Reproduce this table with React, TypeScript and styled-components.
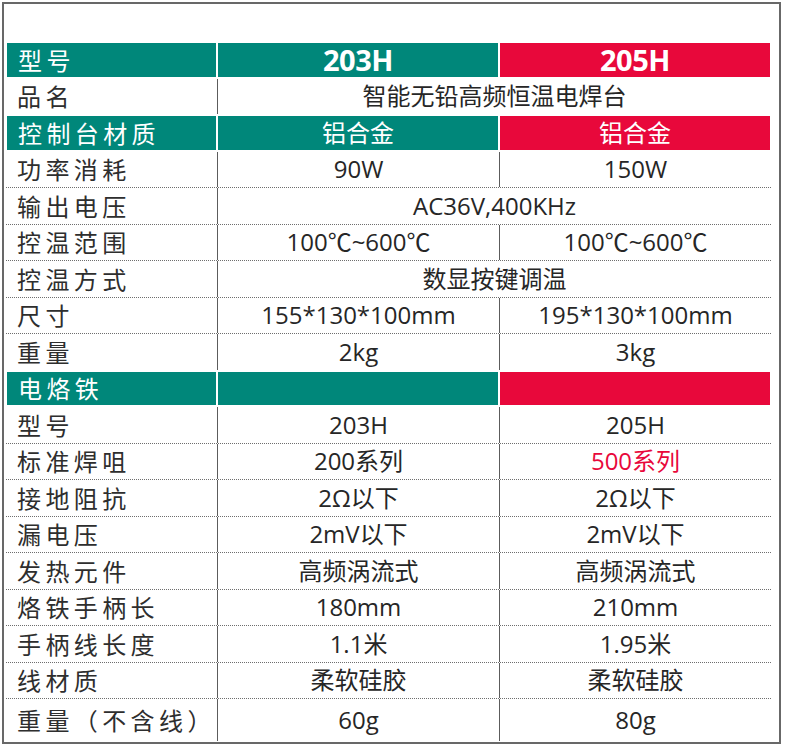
import React from 'react';
import styled, { createGlobalStyle, css } from 'styled-components';

const TEAL = '#00877a';
const RED = '#e8083b';
const RULE = '#5c5c5c';

type Tone = 'teal' | 'red';

type Cell = {
  text: string;
  tone?: Tone;
  bold?: boolean;
  accent?: boolean;
  span?: boolean;
};

type Spec = {
  label: string;
  header?: boolean;
  cells: Cell[];
};

const pair = (a: string, b: string): Cell[] => [{ text: a }, { text: b }];

const rows: Spec[] = [
  {
    label: '型号',
    header: true,
    cells: [
      { text: '203H', tone: 'teal', bold: true },
      { text: '205H', tone: 'red', bold: true },
    ],
  },
  { label: '品名', cells: [{ text: '智能无铅高频恒温电焊台', span: true }] },
  {
    label: '控制台材质',
    header: true,
    cells: [
      { text: '铝合金', tone: 'teal' },
      { text: '铝合金', tone: 'red' },
    ],
  },
  { label: '功率消耗', cells: pair('90W', '150W') },
  { label: '输出电压', cells: [{ text: 'AC36V,400KHz', span: true }] },
  { label: '控温范围', cells: pair('100℃~600℃', '100℃~600℃') },
  { label: '控温方式', cells: [{ text: '数显按键调温', span: true }] },
  { label: '尺寸', cells: pair('155*130*100mm', '195*130*100mm') },
  { label: '重量', cells: pair('2kg', '3kg') },
  {
    label: '电烙铁',
    header: true,
    cells: [
      { text: '', tone: 'teal' },
      { text: '', tone: 'red' },
    ],
  },
  { label: '型号', cells: pair('203H', '205H') },
  { label: '标准焊咀', cells: [{ text: '200系列' }, { text: '500系列', accent: true }] },
  { label: '接地阻抗', cells: pair('2Ω以下', '2Ω以下') },
  { label: '漏电压', cells: pair('2mV以下', '2mV以下') },
  { label: '发热元件', cells: pair('高频涡流式', '高频涡流式') },
  { label: '烙铁手柄长', cells: pair('180mm', '210mm') },
  { label: '手柄线长度', cells: pair('1.1米', '1.95米') },
  { label: '线材质', cells: pair('柔软硅胶', '柔软硅胶') },
  { label: '重量（不含线）', cells: pair('60g', '80g') },
];

export default function App(): JSX.Element {
  return (
    <>
      <GlobalStyle />
      <Frame>
        <Table>
          {rows.map((row, i) => {
            const next = rows[i + 1];
            const ruled = !row.header && !!next && !next.header;
            return (
              <Row key={i} $ruled={ruled} $tall={!next}>
                <Label $tone={row.header ? 'teal' : undefined}>{row.label}</Label>
                {row.cells.map((cell, j) => (
                  <Value
                    key={j}
                    $tone={cell.tone}
                    $span={cell.span}
                    $bold={cell.bold}
                    $accent={cell.accent}
                  >
                    {cell.text}
                  </Value>
                ))}
              </Row>
            );
          })}
        </Table>
      </Frame>
    </>
  );
}

const GlobalStyle = createGlobalStyle`
  html, body {
    margin: 0;
    padding: 0;
    background: #fff;
  }
  body {
    font-family: "Open Sans", "Noto Sans CJK SC", sans-serif;
    color: #262626;
  }
`;

const Frame = styled.div`
  box-sizing: border-box;
  width: 779px;
  margin: 2px 0 0 2px;
  padding: 38px 8px 0 2px;
  border: 2px solid #686868;
`;

const Table = styled.div`
  display: flex;
  flex-direction: column;
`;

const Row = styled.div<{ $ruled: boolean; $tall: boolean }>`
  display: grid;
  grid-template-columns: 211px 282px 272px;
  box-sizing: border-box;
  height: ${p => (p.$tall ? 43 : 36.5)}px;
  border-bottom: 1px dotted ${p => (p.$ruled ? '#6e6e6e' : 'transparent')};
`;

const toned = (tone?: Tone) =>
  tone &&
  css`
    background: ${tone === 'teal' ? TEAL : RED};
    color: #fff;
    border: 1px solid #fff;
  `;

const Label = styled.div<{ $tone?: Tone }>`
  display: flex;
  align-items: center;
  box-sizing: border-box;
  padding-left: 11px;
  font-family: "Noto Sans CJK SC", sans-serif;
  font-size: 24px;
  line-height: 1;
  letter-spacing: 4.4px;
  color: #2e2e2e;
  ${p => toned(p.$tone)}
`;

const Value = styled.div<{ $tone?: Tone; $span?: boolean; $bold?: boolean; $accent?: boolean }>`
  display: flex;
  align-items: center;
  justify-content: center;
  box-sizing: border-box;
  grid-column: span ${p => (p.$span ? 2 : 1)};
  border-left: 1.5px solid ${RULE};
  font-size: ${p => (p.$bold ? 29 : 24)}px;
  font-weight: ${p => (p.$bold ? 700 : 400)};
  letter-spacing: ${p => (p.$bold ? '-0.5px' : 'normal')};
  line-height: 1;
  white-space: nowrap;
  color: ${p => (p.$accent ? RED : '#262626')};
  ${p => toned(p.$tone)}
`;
